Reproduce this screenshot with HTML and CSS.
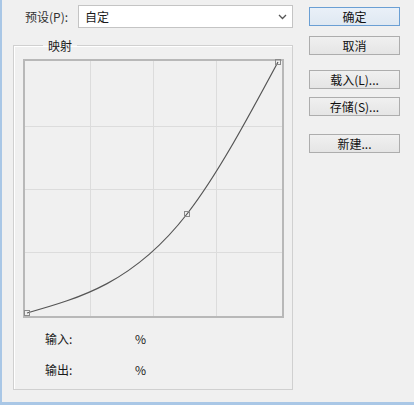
FILE: index.html
```html
<!DOCTYPE html>
<html lang="zh-CN">
<head>
    <meta charset="UTF-8">
    <title>曲线</title>
    <link rel="stylesheet" href="styles.css">
</head>
<body>

<div class="window">
    <div class="main">
        <!-- Preset -->
        <div class="preset">
            <label class="preset-label">预设(P):</label>
            <div class="select">
                <span>自定</span>
                <svg class="chevron" width="9" height="6" viewBox="0 0 9 6">
                    <polyline points="1,1 4.5,4.5 8,1" fill="none" stroke="#555" stroke-width="1.3"/>
                </svg>
            </div>
        </div>

        <!-- Mapping group -->
        <fieldset class="group">
            <legend>映射</legend>
            <svg class="graph" width="262" height="260" viewBox="0 0 262 260">
                <g stroke="#dcdcdc" stroke-width="1">
                    <line x1="67.5" y1="2" x2="67.5" y2="257"/>
                    <line x1="130.5" y1="2" x2="130.5" y2="257"/>
                    <line x1="193.5" y1="2" x2="193.5" y2="257"/>
                    <line x1="2" y1="67.5" x2="259" y2="67.5"/>
                    <line x1="2" y1="130.5" x2="259" y2="130.5"/>
                    <line x1="2" y1="193.5" x2="259" y2="193.5"/>
                </g>
                <rect x="1" y="1" width="259" height="257" fill="none" stroke="#b8b8b8" stroke-width="2"/>
                <!-- natural spline through the three points -->
                <path fill="none" stroke="#555" stroke-width="1.2"
                    d="M4,254 C57.33,238.87 110.67,223.75 164,155 C194.33,115.9 224.67,59.44 255,3"/>
                <g fill="none" stroke="#8a8a8a" stroke-width="1">
                    <rect x="1.5" y="251.5" width="5" height="5"/>
                    <rect x="161.5" y="152.5" width="5" height="5"/>
                    <rect x="252.5" y="0.5" width="5" height="5"/>
                </g>
            </svg>

            <div class="readout">
                <span class="readout-label">输入:</span>
                <span>%</span>
            </div>
            <div class="readout">
                <span class="readout-label">输出:</span>
                <span>%</span>
            </div>
        </fieldset>
    </div>

    <!-- Buttons -->
    <div class="side">
        <button class="btn btn-default">确定</button>
        <button class="btn gap-s">取消</button>
        <button class="btn gap-m">载入(L)...</button>
        <button class="btn gap-xs">存储(S)...</button>
        <button class="btn gap-l">新建...</button>
    </div>
</div>

</body>
</html>
```

FILE: styles.css
```css
body {
    margin: 0;
    padding: 0;
    background: #f0f0f0;
    font-family: "Noto Sans CJK SC", "Liberation Sans", sans-serif;
    font-size: 12px;
    color: #1a1a1a;
}

.window {
    display: flex;
    width: 412px;
    height: 402px;
    border-left: 2px solid #a9c7e6;
    border-bottom: 3px solid #a9c7e6;
    background: #f0f0f0;
}

.main {
    width: 280px;
    padding-left: 11px;
    padding-top: 5px;
}

.preset {
    display: flex;
    align-items: center;
    height: 23px;
}

.preset-label {
    width: 53px;
    padding-left: 12px;
    color: #333;
}

.select {
    display: flex;
    align-items: center;
    justify-content: space-between;
    box-sizing: border-box;
    width: 215px;
    height: 23px;
    padding: 0 5px 0 6px;
    background: #fff;
    border: 1px solid #c4c4c4;
}

.chevron {
    margin-top: 1px;
}

.group {
    margin: 9px 0 0 0;
    padding: 5px 7px 0 9px;
    width: 262px;
    height: 346px;
    border: 1px solid #d0d0d0;
    box-shadow: inset 1px 1px 0 #fff;
}

.group legend {
    margin-left: 20px;
    padding: 0 5px;
    line-height: 17px;
}

.graph {
    display: block;
}

.readout {
    display: flex;
    height: 31px;
    align-items: center;
    padding-left: 22px;
}

.readout:first-of-type {
    margin-top: 4px;
}

.readout-label {
    width: 90px;
}

.side {
    display: flex;
    flex-direction: column;
    padding-top: 7px;
    margin-left: 16px;
}

.btn {
    box-sizing: border-box;
    width: 91px;
    height: 19px;
    padding: 0;
    font-family: inherit;
    font-size: 12px;
    line-height: 17px;
    color: #111;
    background: linear-gradient(#f0f0f0, #e5e5e5);
    border: 1px solid #adadad;
}

.btn-default {
    border-color: #6a9fd4;
    background: linear-gradient(#e9f0f8, #dfe8f2);
}

.gap-xs { margin-top: 8px; }
.gap-s { margin-top: 10px; }
.gap-m { margin-top: 15px; }
.gap-l { margin-top: 18px; }
```
